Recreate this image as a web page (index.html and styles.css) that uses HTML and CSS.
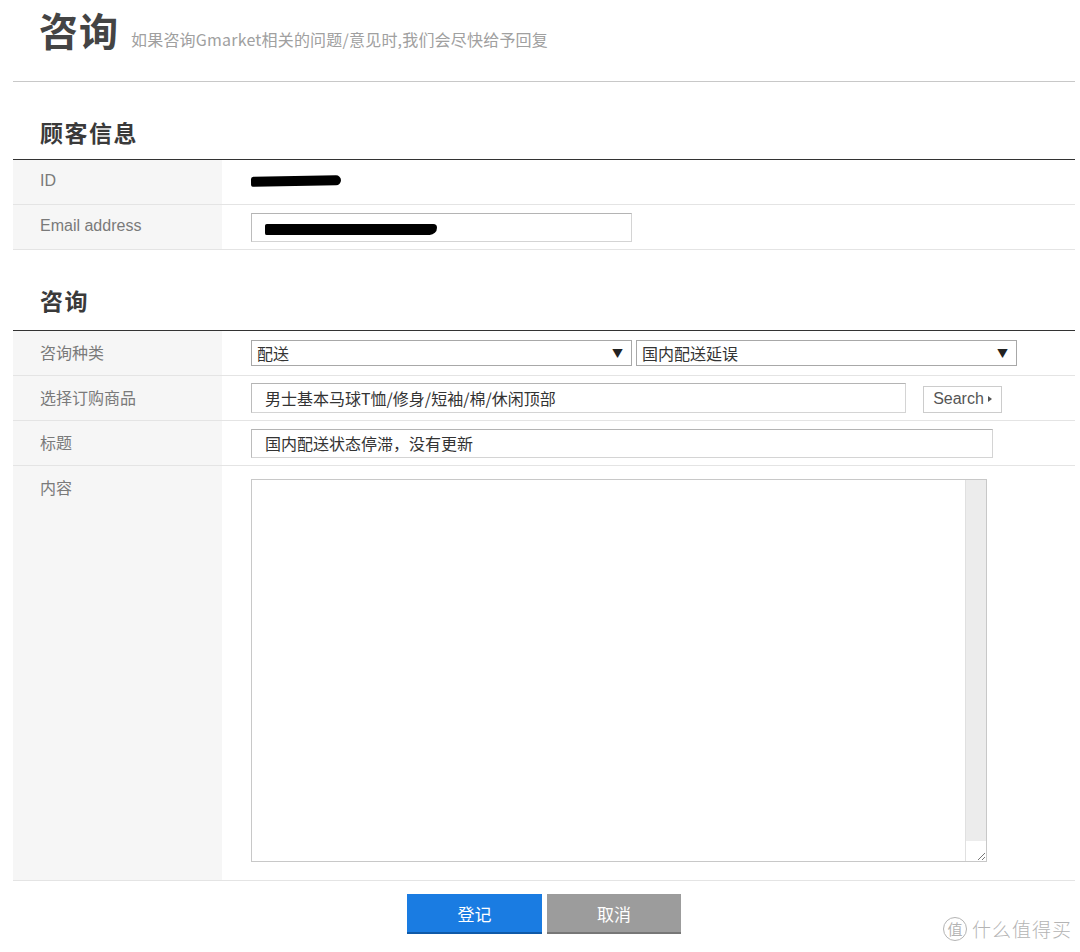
FILE: index.html
```html
<!DOCTYPE html>
<html lang="zh">
<head>
<meta charset="utf-8">
<title>咨询</title>
<link rel="stylesheet" href="styles.css">
</head>
<body>
<div class="page">
  <header class="top">
    <h1 class="title">咨询</h1>
    <span class="subtitle">如果咨询Gmarket相关的问题/意见时,我们会尽快给予回复</span>
  </header>

  <h2 class="sec-head">顾客信息</h2>
  <div class="table">
    <div class="row">
      <div class="label">ID</div>
      <div class="value"><span class="blot blot-id"></span></div>
    </div>
    <div class="row">
      <div class="label">Email address</div>
      <div class="value">
        <div class="input input-email"><span class="blot blot-email"></span></div>
      </div>
    </div>
  </div>

  <h2 class="sec-head sec-head2">咨询</h2>
  <div class="table">
    <div class="row">
      <div class="label">咨询种类</div>
      <div class="value selects">
        <div class="select sel1"><span>配送</span><span class="arrow">▼</span></div>
        <div class="select sel2"><span>国内配送延误</span><span class="arrow">▼</span></div>
      </div>
    </div>
    <div class="row">
      <div class="label">选择订购商品</div>
      <div class="value product">
        <div class="input input-product">男士基本马球T恤/修身/短袖/棉/休闲顶部</div>
        <div class="search-btn">Search<span class="tri"></span></div>
      </div>
    </div>
    <div class="row">
      <div class="label">标题</div>
      <div class="value">
        <div class="input input-title">国内配送状态停滞，没有更新</div>
      </div>
    </div>
    <div class="row row-content">
      <div class="label label-top">内容</div>
      <div class="value value-top">
        <div class="textarea">
          <div class="ta-body"></div>
          <div class="ta-scroll">
            <div class="ta-track"></div>
            <div class="ta-grip">
              <svg width="12" height="12" viewBox="0 0 12 12"><path d="M4 11 L11 4 M8 11 L11 8" stroke="#777" stroke-width="1" fill="none"/></svg>
            </div>
          </div>
        </div>
      </div>
    </div>
  </div>

  <div class="actions">
    <div class="btn btn-primary">登记</div>
    <div class="btn btn-cancel">取消</div>
  </div>

  <div class="watermark"><span class="wm-circle">值</span><span class="wm-text">什么值得买</span></div>
</div>
</body>
</html>
```

FILE: styles.css
```css
* { box-sizing: border-box; }
html, body {
  margin: 0;
  padding: 0;
  background: #fff;
}
body {
  font-family: "Noto Sans CJK SC", "Liberation Sans", sans-serif;
  color: #333;
  width: 1080px;
  height: 952px;
  overflow: hidden;
}
.page {
  position: relative;
  width: 1080px;
  height: 952px;
  padding: 0 5px 0 13px;
}
.top {
  display: flex;
  align-items: baseline;
  height: 82px;
  border-bottom: 1px solid #c8c8c8;
  padding-left: 26px;
}
.title {
  margin: 0;
  font-size: 39px;
  font-weight: 700;
  color: #444;
  line-height: 58px;
  letter-spacing: 1px;
}
.subtitle {
  margin-left: 12px;
  font-size: 16px;
  color: #a0a0a0;
  letter-spacing: 0.2px;
}
.sec-head {
  margin: 0;
  padding-left: 27px;
  font-size: 23px;
  font-weight: 700;
  color: #3a3a3a;
  height: 78px;
  line-height: 26px;
  padding-top: 37px;
  border-bottom: 1px solid #333;
  letter-spacing: 1.5px;
}
.sec-head2 {
  height: 81px;
  padding-top: 37px;
}
.table { display: flex; flex-direction: column; }
.row {
  display: grid;
  grid-template-columns: 209px 1fr;
  height: 45px;
  border-bottom: 1px solid #e4e4e4;
}
.label {
  background: #f6f6f6;
  padding-left: 27px;
  padding-bottom: 3px;
  display: flex;
  align-items: center;
  font-size: 16px;
  color: #7a7a7a;
  font-family: "Liberation Sans", "Noto Sans CJK SC", sans-serif;
}
.value {
  display: flex;
  align-items: center;
  padding-left: 29px;
}
.blot {
  display: block;
  background: #000;
}
.blot-id {
  width: 90px;
  height: 10px;
  border-radius: 3px 6px 6px 2px;
  transform: rotate(-1deg);
  margin-top: -2px;
}
.input {
  border: 1px solid #d4d4d4;
  border-top-color: #b4b4b4;
  border-left-color: #bcbcbc;
  background: #fff;
  font-size: 16px;
  color: #333;
  display: flex;
  align-items: center;
  padding-left: 13px;
}
.input-email {
  width: 381px;
  height: 29px;
  margin-top: 1px;
}
.blot-email {
  width: 172px;
  height: 11px;
  border-radius: 2px 4px 8px 2px;
  margin-top: 3px;
}
.selects { gap: 4px; }
.select {
  height: 26px;
  border: 1px solid #a8a8a8;
  display: flex;
  align-items: center;
  justify-content: space-between;
  padding: 0 8px 0 5px;
  font-size: 16px;
  color: #333;
  background: #fff;
}
.sel1 { width: 381px; }
.sel2 { width: 381px; }
.arrow {
  font-size: 11px;
  color: #222;
}
.product { gap: 17px; }
.input-product {
  width: 655px;
  height: 30px;
}
.search-btn {
  width: 79px;
  height: 27px;
  border: 1px solid #ccc;
  display: flex;
  align-items: center;
  justify-content: center;
  font-family: "Liberation Sans", sans-serif;
  font-size: 16px;
  color: #555;
  gap: 4px;
  margin-top: 2px;
}
.tri {
  width: 0;
  height: 0;
  border-left: 4px solid #555;
  border-top: 3px solid transparent;
  border-bottom: 3px solid transparent;
}
.input-title {
  width: 742px;
  height: 29px;
}
.row-content {
  height: 415px;
}
.label-top {
  align-items: flex-start;
  padding-top: 9px;
}
.value-top {
  align-items: flex-start;
  padding-top: 13px;
}
.textarea {
  width: 736px;
  height: 383px;
  border: 1px solid #c8c8c8;
  display: flex;
  background: #fff;
}
.ta-body { flex: 1; }
.ta-scroll {
  width: 21px;
  display: flex;
  flex-direction: column;
  border-left: 1px solid #e0e0e0;
}
.ta-track {
  flex: 1;
  background: #ececec;
}
.ta-grip {
  height: 20px;
  background: #fff;
  display: flex;
  align-items: flex-end;
  justify-content: flex-end;
}
.ta-grip svg { display: block; }
.actions {
  display: flex;
  justify-content: center;
  gap: 5px;
  padding-top: 13px;
}
.btn {
  width: 135px;
  height: 40px;
  display: flex;
  align-items: center;
  justify-content: center;
  font-size: 17px;
  color: #fff;
}
.btn-primary {
  background: #1a7ce2;
  border-bottom: 2px solid #0f5aa8;
}
.btn-cancel {
  background: #9c9c9c;
  border-bottom: 2px solid #777;
  width: 134px;
}
.watermark {
  position: absolute;
  right: 8px;
  bottom: 10px;
  display: flex;
  align-items: center;
  gap: 5px;
  color: #b4b4b4;
  font-size: 19px;
}
.wm-circle {
  width: 24px;
  height: 24px;
  border: 1.5px solid #b4b4b4;
  border-radius: 50%;
  font-size: 15px;
  display: flex;
  align-items: center;
  justify-content: center;
}
.wm-text { font-weight: 300; letter-spacing: 1px; }
```
